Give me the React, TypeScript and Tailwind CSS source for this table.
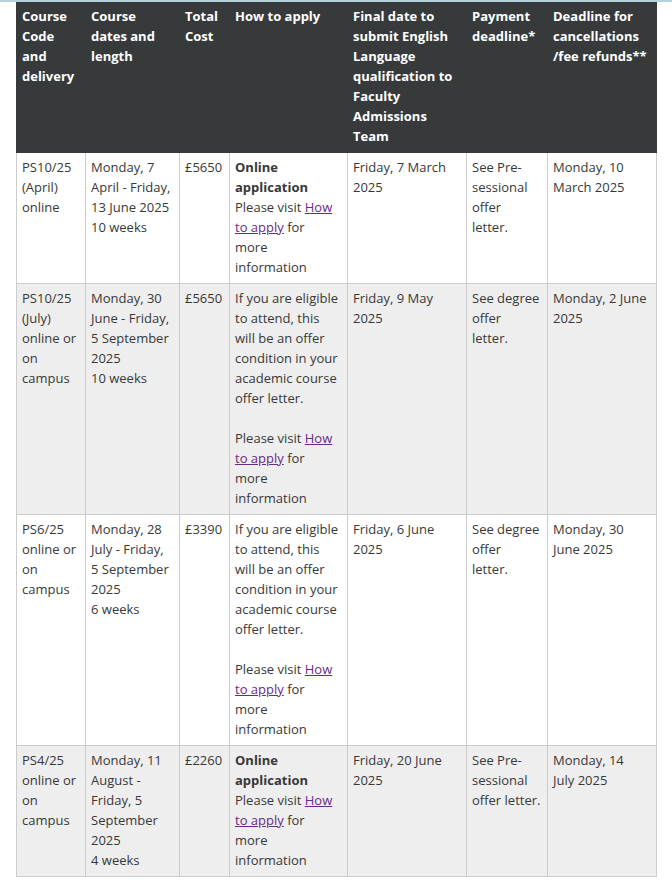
const headers = [
  ['Course', 'Code', 'and', 'delivery'],
  ['Course', 'dates and', 'length'],
  ['Total', 'Cost'],
  ['How to apply'],
  ['Final date to', 'submit English', 'Language', 'qualification to', 'Faculty', 'Admissions', 'Team'],
  ['Payment', 'deadline*'],
  ['Deadline for', 'cancellations', '/fee refunds**'],
];

function Lines({ lines }: { lines: string[] }) {
  return (
    <>
      {lines.map((l, j) => (
        <div key={j}>{l}</div>
      ))}
    </>
  );
}

function HowToApply() {
  return (
    <>
      <div>
        Please visit{' '}
        <a href="#" className="text-[#6a2a85] underline">
          How
        </a>
      </div>
      <div>
        <a href="#" className="text-[#6a2a85] underline">
          to apply
        </a>{' '}
        for
      </div>
      <div>more</div>
      <div>information</div>
    </>
  );
}

function OnlineApply() {
  return (
    <>
      <div className="font-bold">Online</div>
      <div className="font-bold">application</div>
      <HowToApply />
    </>
  );
}

function OfferCondition() {
  return (
    <>
      <div className="mb-5">
        <Lines lines={['If you are eligible', 'to attend, this', 'will be an offer', 'condition in your', 'academic course', 'offer letter.']} />
      </div>
      <HowToApply />
    </>
  );
}

const rows = [
  {
    code: ['PS10/25', '(April)', 'online'],
    dates: ['Monday, 7', 'April - Friday,', '13 June 2025', '10 weeks'],
    cost: '£5650',
    apply: <OnlineApply />,
    english: ['Friday, 7 March', '2025'],
    payment: ['See Pre-', 'sessional', 'offer', 'letter.'],
    cancel: ['Monday, 10', 'March 2025'],
  },
  {
    code: ['PS10/25', '(July)', 'online or', 'on', 'campus'],
    dates: ['Monday, 30', 'June - Friday,', '5 September', '2025', '10 weeks'],
    cost: '£5650',
    apply: <OfferCondition />,
    english: ['Friday, 9 May', '2025'],
    payment: ['See degree', 'offer', 'letter.'],
    cancel: ['Monday, 2 June', '2025'],
  },
  {
    code: ['PS6/25', 'online or', 'on', 'campus'],
    dates: ['Monday, 28', 'July - Friday,', '5 September', '2025', '6 weeks'],
    cost: '£3390',
    apply: <OfferCondition />,
    english: ['Friday, 6 June', '2025'],
    payment: ['See degree', 'offer', 'letter.'],
    cancel: ['Monday, 30', 'June 2025'],
  },
  {
    code: ['PS4/25', 'online or', 'on', 'campus'],
    dates: ['Monday, 11', 'August -', 'Friday, 5', 'September', '2025', '4 weeks'],
    cost: '£2260',
    apply: <OnlineApply />,
    english: ['Friday, 20 June', '2025'],
    payment: ['See Pre-', 'sessional', 'offer letter.'],
    cancel: ['Monday, 14', 'July 2025'],
  },
];

const td = 'border border-[#cccccc] align-top px-[5px] pt-[4px] pb-[6px] text-left whitespace-nowrap';

export default function App() {
  return (
    <div
      className="min-h-screen bg-white text-[13px] leading-5 text-[#383838]"
      style={{ fontFamily: '"Open Sans", "Liberation Sans", Arial, sans-serif' }}
    >
      <div className="h-[2px] bg-[#b3d2de]" />
      <table className="ml-4 w-[640px] table-fixed border-collapse">
        <colgroup>
          <col className="w-[69px]" />
          <col className="w-[94px]" />
          <col className="w-[50px]" />
          <col className="w-[118px]" />
          <col className="w-[119px]" />
          <col className="w-[81px]" />
          <col className="w-[109px]" />
        </colgroup>
        <thead>
          <tr className="bg-[#363a3b]">
            {headers.map((h, i) => (
              <th
                key={i}
                className="border border-[#363a3b] px-[5px] pt-[3px] pb-[6px] text-left align-top font-bold whitespace-nowrap text-white"
              >
                <Lines lines={h} />
              </th>
            ))}
          </tr>
        </thead>
        <tbody>
          {rows.map((r, i) => (
            <tr key={i} className={i % 2 === 1 ? 'bg-[#eeeeee]' : 'bg-white'}>
              <td className={td}>
                <Lines lines={r.code} />
              </td>
              <td className={td}>
                <Lines lines={r.dates} />
              </td>
              <td className={td}>{r.cost}</td>
              <td className={td}>{r.apply}</td>
              <td className={td}>
                <Lines lines={r.english} />
              </td>
              <td className={td}>
                <Lines lines={r.payment} />
              </td>
              <td className={td}>
                <Lines lines={r.cancel} />
              </td>
            </tr>
          ))}
        </tbody>
      </table>
    </div>
  );
}
